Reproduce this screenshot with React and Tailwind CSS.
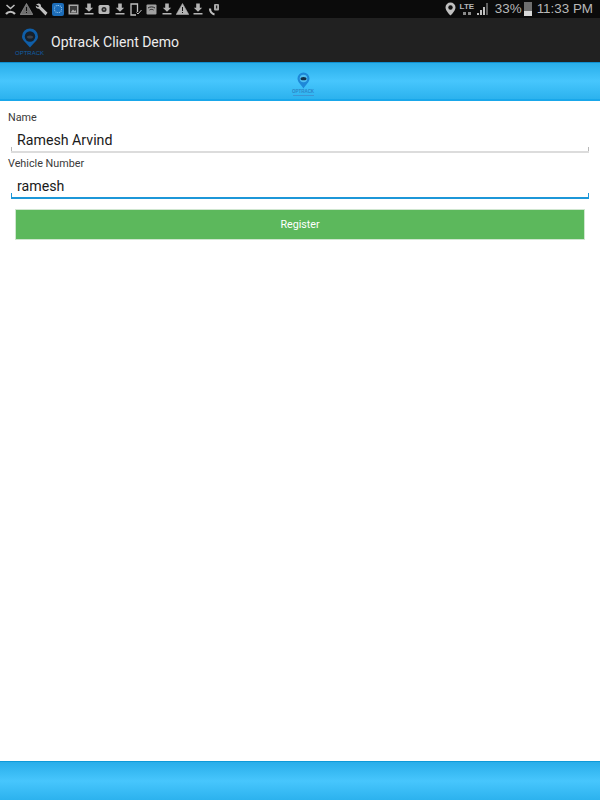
const Download = () => (
  <svg width="10" height="12" viewBox="0 0 10 12" fill="#b4b4b4">
    <path d="M3.200 .5h3.600v4.300h2.400L5 8.800 .8 4.800h2.400z" />
    <rect x="0.500" y="10" width="9" height="1.500" />
  </svg>
)

const Warning = ({ fill = '#b4b4b4' }) => (
  <svg width="13" height="12" viewBox="0 0 13 12">
    <path d="M6.500.5 12.800 11.500H.2z" fill={fill} stroke="#a8a8a8" strokeWidth="0.600" />
    <rect x="6" y="4" width="1" height="4" fill="#111" />
    <rect x="6" y="9" width="1" height="1" fill="#111" />
  </svg>
)

const Slot = ({ children }) => (
  <div className="w-[15.6px] flex items-center justify-center">{children}</div>
)

function LeftIcons() {
  return (
    <div className="flex items-center pl-[3px]">
      {/* missed call */}
      <Slot>
        <svg width="11" height="11" viewBox="0 0 11 11" fill="none" stroke="#c0c0c0">
          <path d="M1 10c2.500-3 6.500-3 9 0" strokeWidth="2.200" />
          <path d="M1.500 1l4 3.500L9.500 1" strokeWidth="1.500" />
        </svg>
      </Slot>
      <Slot><Warning fill="#6f6f6f" /></Slot>
      {/* wrench */}
      <Slot>
        <svg width="13" height="13" viewBox="0 0 13 13" fill="#c0c0c0">
          <path d="M1 1.500 3.500.5C5 .5 6.200 1.700 6 3.500L12.500 9.800 10.500 12.500 4 5.800C2.200 6 .5 4.500.8 2.700L3 4.200 4.200 3z" />
        </svg>
      </Slot>
      {/* sync app */}
      <Slot>
        <div className="w-[12px] h-[13px] rounded-[2px] bg-[#1c6cb8] flex items-center justify-center">
          <div className="w-[8px] h-[8px] rounded-full border border-dotted border-[#a8d4f5]" />
        </div>
      </Slot>
      {/* picture */}
      <Slot>
        <svg width="11" height="11" viewBox="0 0 11 11">
          <rect x="0.500" y="0.500" width="10" height="10" fill="#a8a8a8" />
          <rect x="2" y="2" width="7" height="7" fill="#3a3a3a" />
          <path d="M2.500 8.500l2.500-3 1.500 1.500L7.500 6 8.500 8.500z" fill="#a8a8a8" />
        </svg>
      </Slot>
      <Slot><Download /></Slot>
      {/* camera */}
      <Slot>
        <svg width="12" height="11" viewBox="0 0 12 11">
          <rect x="0.500" y="1" width="11" height="9" rx="1.500" fill="#b8b8b8" />
          <circle cx="6" cy="5.500" r="2.500" fill="#2a2a2a" />
          <circle cx="6" cy="5.500" r="1" fill="#8a8a8a" />
        </svg>
      </Slot>
      <Slot><Download /></Slot>
      {/* phone with check */}
      <Slot>
        <svg width="12" height="13" viewBox="0 0 12 13" fill="none" stroke="#c0c0c0">
          <path d="M7.500 9V1H1v11h5" strokeWidth="1.300" />
          <path d="M6.500 9.500l1.500 1.500L11.500 7" strokeWidth="1" />
        </svg>
      </Slot>
      {/* wifi box */}
      <Slot>
        <svg width="11" height="11" viewBox="0 0 11 11">
          <rect x="0.500" y="0.500" width="10" height="10" rx="1" fill="#a0a0a0" />
          <path d="M2 4c2-1.500 5-1.500 7 0M3.500 6c1.200-.8 2.800-.8 4 0" fill="none" stroke="#222" strokeWidth="1" />
        </svg>
      </Slot>
      <Slot><Download /></Slot>
      <Slot><Warning fill="#b4b4b4" /></Slot>
      <Slot><Download /></Slot>
      {/* voicemail handset */}
      <Slot>
        <svg width="12" height="13" viewBox="0 0 12 13" fill="none" stroke="#c0c0c0">
          <path d="M2 5.500c0 3 2 5.500 4.500 6" strokeWidth="2.200" />
          <rect x="6" y="1" width="5" height="6.500" rx="1" fill="#a8a8a8" stroke="none" />
          <rect x="8" y="2.500" width="1.200" height="3" fill="#222" stroke="none" />
        </svg>
      </Slot>
    </div>
  )
}

function RightIcons() {
  return (
    <div className="flex items-center pr-[7px] text-[#b8b8b8] font-['Liberation_Sans',sans-serif] text-[13.4px] leading-[18px]">
      {/* location pin */}
      <svg width="11" height="14" viewBox="0 0 11 14" className="mr-[5px]">
        <path d="M5.500.5A5 5 0 0 0 .5 5.500C.5 9 5.500 13.500 5.500 13.500S10.500 9 10.500 5.500A5 5 0 0 0 5.500.5z" fill="#c0c0c0" />
        <circle cx="5.500" cy="5.500" r="2.200" fill="#111" />
      </svg>
      <div className="flex flex-col items-center mr-[4px] w-[12px]">
        <span className="text-[8px] leading-[8px] font-bold">LTE</span>
        <div className="flex gap-[2px] mt-[1px]">
          <div className="w-[3px] h-[3px] bg-[#8a8a8a]" />
          <div className="w-[3px] h-[3px] bg-[#8a8a8a]" />
        </div>
      </div>
      {/* signal */}
      <svg width="12" height="12" viewBox="0 0 12 12" className="mr-[6px]">
        <path d="M0 12h2V10H0zM3 12h2V7H3zM6 12h2V4H6z" fill="#c0c0c0" />
        <path d="M9 12h2V0H9z" fill="#5f5f5f" />
      </svg>
      <span>33%</span>
      {/* battery */}
      <div className="w-[8px] h-[14px] ml-[2px] mr-[5px] flex flex-col">
        <div className="flex-1 bg-[#6e6e6e]" />
        <div className="h-[5px] bg-[#d8d8d8]" />
      </div>
      <span>11:33 PM</span>
    </div>
  )
}

function Field({ label, value, line, tick }) {
  return (
    <>
      <label className="ml-[8px] text-[10.8px] leading-[13px] text-[#3a3a3a]">{label}</label>
      <div className={`relative mx-[11px] mt-[3px] h-[26px] border-b-2 ${line} flex items-center pt-[4px] pl-[6px] text-[14.2px] text-[#1a1a1a]`}>
        {value}
        <div className={`absolute left-0 bottom-0 w-[1px] h-[4px] ${tick}`} />
        <div className={`absolute right-0 bottom-0 w-[1px] h-[4px] ${tick}`} />
      </div>
    </>
  )
}

export default function App() {
  return (
    <div className="w-[600px] h-[800px] flex flex-col bg-white font-['Roboto',sans-serif]">
      <div className="h-[18px] bg-[#0b0b0b] flex items-center justify-between shrink-0">
        <LeftIcons />
        <RightIcons />
      </div>

      <div className="h-[44px] bg-[#212121] flex items-center shrink-0 pl-[16px]">
        <div className="flex flex-col items-center w-[27px] pt-[4px]">
          <svg width="18" height="20" viewBox="0 0 18 20">
            <path d="M9 .5A8 8 0 0 0 1 8.500c0 4 4.500 6.500 8 11 3.500-4.500 8-7 8-11A8 8 0 0 0 9 .5z" fill="#0f5ea8" />
            <circle cx="9" cy="8.500" r="5.200" fill="#16202b" />
            <ellipse cx="9" cy="9" rx="3" ry="1.500" fill="#3c4148" />
          </svg>
          <span className="mt-[3px] text-[6px] leading-[5px] text-[#0f5ea8] font-['Liberation_Sans',sans-serif]">OPTRACK</span>
        </div>
        <span className="ml-[8px] pt-[4px] text-[14px] text-[#ededed]">Optrack Client Demo</span>
      </div>

      <div className="h-[39px] shrink-0 flex items-center justify-center border-t border-[#0f8fd0] border-b-2 border-b-[#19a7ea] bg-[linear-gradient(to_bottom,#29aeea,#47c6fd_50%,#2cb2ee)]">
        <div className="flex flex-col items-center pt-[5px] ml-[6px]">
          <svg width="13" height="17" viewBox="0 0 13 17">
            <path d="M6.500.5A6 6 0 0 0 .5 6.500c0 3.500 3.500 6 6 10 2.500-4 6-6.500 6-10A6 6 0 0 0 6.500.5z" fill="#1e88d8" />
            <circle cx="6.500" cy="6.500" r="3.800" fill="#4fc0f5" />
            <ellipse cx="6.500" cy="6.700" rx="3" ry="1.600" fill="#12314c" />
          </svg>
          <span className="mt-[1px] text-[4.500px] leading-[4px] font-bold text-[#2a86c8] font-['Liberation_Sans',sans-serif]">OPTRACK</span>
          <div className="mt-[1px] w-[21px] h-[1px] bg-[#3c95d4]" />
        </div>
      </div>

      <div className="flex-1 flex flex-col pt-[10px]">
        <Field label="Name" value="Ramesh Arvind" line="border-[#dcdcdc]" tick="bg-[#b8b8b8]" />
        <div className="h-[4px]" />
        <Field label="Vehicle Number" value="ramesh" line="border-[#1c97d8]" tick="bg-[#1c97d8]" />
        <button className="mx-[15px] mt-[10px] h-[31px] pt-[2px] bg-[#5cb85c] border border-[#cfe6cf] text-white text-[10.7px]">
          Register
        </button>
      </div>

      <div className="h-[39px] shrink-0 border-t border-[#0f9ad8] bg-[linear-gradient(to_bottom,#29aeea,#47c6fd_50%,#2cb2ee)]" />
    </div>
  )
}
